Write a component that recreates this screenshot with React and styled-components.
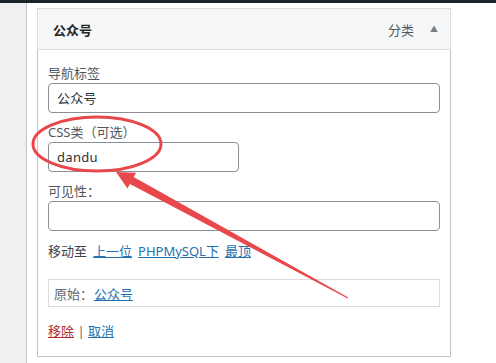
import React from 'react';
import styled, { createGlobalStyle } from 'styled-components';

const GlobalStyle = createGlobalStyle`
  html, body {
    margin: 0;
    padding: 0;
    background: #fff;
  }
  body {
    font-family: "Noto Sans", "Noto Sans CJK SC", sans-serif;
    font-size: 13px;
    color: #3c434a;
  }
`;

const Page = styled.div`
  position: relative;
  width: 496px;
  height: 363px;
  overflow: hidden;
  display: flex;
  flex-direction: column;
`;

const TopBar = styled.div`
  height: 3px;
  background: #1d2327;
  flex: none;
`;

const Body = styled.div`
  flex: 1;
  display: flex;
`;

const Sidebar = styled.div`
  width: 26px;
  background: #f0f0f1;
  border-right: 1px solid #c3c4c7;
  flex: none;
`;

const Main = styled.div`
  flex: 1;
  padding: 5px 0 0 10px;
`;

const Panel = styled.div`
  width: 414px;
  box-sizing: border-box;
`;

const Header = styled.div`
  height: 42px;
  box-sizing: border-box;
  background: #f6f7f7;
  border: 1px solid #dcdcde;
  display: flex;
  align-items: center;
  padding: 0 12px 0 15px;
`;

const Title = styled.div`
  flex: 1;
  font-weight: 700;
  font-size: 13px;
  color: #1d2327;
`;

const Type = styled.span`
  color: #50575e;
  font-size: 13px;
  margin-right: 16px;
`;

const Toggle = styled.span`
  color: #787c82;
  font-size: 8px;
  margin-top: -2px;
`;

const Content = styled.div`
  border: 1px solid #c3c4c7;
  border-top: none;
  padding: 13px 10px 15px;
`;

const Label = styled.label`
  display: block;
  line-height: 20px;
  color: #50575e;
`;

const Input = styled.div`
  box-sizing: border-box;
  width: ${p => p.$w || 392}px;
  height: 30px;
  border: 1px solid #8c8f94;
  border-radius: 4px;
  padding: 0 8px;
  line-height: 28px;
  color: #2c3338;
  margin-bottom: 9px;
  font-size: 13px;
  letter-spacing: 0.3px;
`;

const MoveRow = styled.div`
  display: flex;
  gap: 6px;
  line-height: 20px;
  margin-top: 10px;
  color: #3c434a;
`;

const Link = styled.a`
  color: ${p => (p.$danger ? '#b32d2e' : '#2271b1')};
  text-decoration: underline;
  cursor: pointer;
`;

const Original = styled.div`
  box-sizing: border-box;
  margin-top: 18px;
  width: 392px;
  height: 28px;
  border: 1px solid #dcdcde;
  padding: 0 5px;
  display: flex;
  align-items: center;
  gap: 1px;
  color: #646970;
`;

const Actions = styled.div`
  margin-top: 14px;
  line-height: 20px;
  color: #646970;
`;

const Overlay = styled.svg`
  position: absolute;
  left: 0;
  top: 0;
  pointer-events: none;
`;

const Annotation = () => (
  <Overlay width="496" height="363" viewBox="0 0 496 363">
    <ellipse cx="97" cy="144" rx="64" ry="27" fill="none" stroke="#e8484b" strokeWidth="3" />
    <polygon
      fill="#e8484b"
      points="116,172 136.1,172.7 133.7,177.1 348.3,297.6 347.7,298.4 129.9,184.1 127.5,188.5"
    />
  </Overlay>
);

export default function App() {
  return (
    <>
      <GlobalStyle />
      <Page>
        <TopBar />
        <Body>
          <Sidebar />
          <Main>
            <Panel>
              <Header>
                <Title>公众号</Title>
                <Type>分类</Type>
                <Toggle>▲</Toggle>
              </Header>
              <Content>
                <Label>导航标签</Label>
                <Input>公众号</Input>
                <Label>CSS类（可选）</Label>
                <Input $w={191}>dandu</Input>
                <Label>可见性：</Label>
                <Input />
                <MoveRow>
                  <span>移动至</span>
                  <Link>上一位</Link>
                  <Link>PHPMySQL下</Link>
                  <Link>最顶</Link>
                </MoveRow>
                <Original>
                  <span>原始：</span>
                  <Link>公众号</Link>
                </Original>
                <Actions>
                  <Link $danger>移除</Link> | <Link>取消</Link>
                </Actions>
              </Content>
            </Panel>
          </Main>
        </Body>
        <Annotation />
      </Page>
    </>
  );
}
